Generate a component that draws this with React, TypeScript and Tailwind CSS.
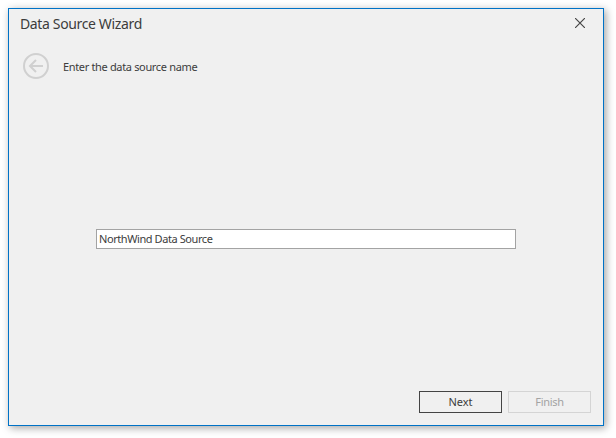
import React from "react";

export default function App() {
  return (
    <div className="h-[438px] w-[616px] overflow-hidden bg-white pl-2 pt-2 font-['Noto_Sans',sans-serif] text-[11px] text-[#3c3c3c]">
      <main className="flex h-[418px] w-[596px] flex-col border border-[#0072c6] bg-[#f0f0f0] shadow-[2px_2px_8px_0px_rgba(0,0,0,0.36)]">
        <header className="flex h-[29px] items-center justify-between pl-[11px] pr-[18px]">
          <h1 className="text-[14px] leading-[29px] tracking-[-0.36px]">Data Source Wizard</h1>
          <button aria-label="Close" className="mb-px">
            <svg width="10" height="10" viewBox="0 0 10 10" fill="none" stroke="#444444" strokeWidth="1.15">
              <path d="M0 0l10 10M10 0L0 10" />
            </svg>
          </button>
        </header>
        <div className="mt-[15px] flex h-[26px] items-center gap-[14px] pl-[14px]">
          <svg width="26" height="26" viewBox="0 0 26 26" fill="none" stroke="#d0d0d0" strokeWidth="2">
            <circle cx="13" cy="13" r="12" />
            <path d="M7 13h13M13 7l-6 6 6 6" />
          </svg>
          <p className="pt-0.5 leading-[26px] tracking-[-0.34px]">Enter the data source name</p>
        </div>
        <div className="mt-[150px] px-[87px]">
          <input
            className="block h-5 w-[420px] border border-[#a3a3a3] bg-white px-[2px] pb-[2px] text-[11px] tracking-[-0.42px] outline-none"
            defaultValue="NorthWind Data Source"
          />
        </div>
        <footer className="mt-auto flex justify-end gap-1.5 pb-3 pr-3">
          <button className="h-[22px] w-[83px] border border-[#444444]">Next</button>
          <button className="h-[22px] w-[83px] border border-[#d4d4d4] tracking-[-0.3px] text-[#a3a3a3]" disabled>Finish</button>
        </footer>
      </main>
    </div>
  );
}
